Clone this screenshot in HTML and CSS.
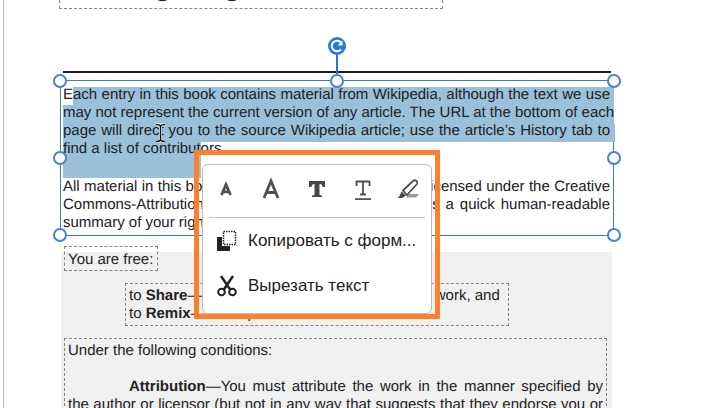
FILE: index.html
```html
<!DOCTYPE html>
<html lang="en">
<head>
<meta charset="utf-8">
<meta name="viewport" content="width=device-width, initial-scale=1">
<title>PDF editor</title>
<link rel="stylesheet" href="styles.css">
</head>
<body>
<main class="page">
  <header class="heading text-box"><h1>Legal rights</h1></header>
  <section class="edited">
    <svg class="highlight" aria-hidden="true"><rect x="13" y="6" width="541" height="37" /><rect x="3" y="24" width="548" height="37"/><rect x="3" y="61" width="138" height="36"/><rect x="551" y="43" width="4" height="18"/></svg>
    <p>Each entry in this book contains material from Wikipedia, although the text we use<br>may not represent the current version of any article. The URL at the bottom of each<br>page will direct you to the source Wikipedia article; use the article’s History tab to</p>
    <p class="last">find a list of contributors.</p>
    <p class="next">All material in this book is, unless otherwise indicated, licensed under the Creative<br>Commons-Attribution-ShareAlike License. This provides a quick human-readable</p>
    <p class="last">summary of your rights.</p>
    <span class="handle top left"></span><span class="handle top center"></span><span class="handle top right"></span>
    <span class="handle middle left"></span><span class="handle middle right"></span>
    <span class="handle bottom left"></span><span class="handle bottom center"></span><span class="handle bottom right"></span>
    <button class="rotate" type="button" aria-label="Rotate">
      <svg viewBox="0 0 18 30" width="18" height="30"><path d="M9 17v13" stroke="#1f7ae0" stroke-width="2"/><circle cx="9" cy="9" r="9" fill="#2b78dc"/><path d="M13 12.500A5.300 5.300 0 1 1 13 5.500" fill="none" stroke="#fff" stroke-width="2"/><path d="M14.500 3.500v5h-5z" fill="#fff"/></svg>
    </button>
    <svg class="cursor" viewBox="0 0 11 20" width="11" height="20" aria-hidden="true"><path d="M1 1.500q4 0 4.500 2q.5-2 4.500-2M1 18.500q4 0 4.500-2q.5 2 4.500 2M5.500 3v14" fill="none" stroke="#fff" stroke-width="3"/><path d="M1 1.500q4 0 4.500 2q.5-2 4.500-2M1 18.500q4 0 4.500-2q.5 2 4.500 2M5.500 3v14" fill="none" stroke="#111" stroke-width="1.500"/></svg>
    <div class="menu-frame">
      <div class="menu" role="menu">
        <div class="tools">
          <button type="button" aria-label="Decrease font size"><svg viewBox="0 0 24 24"><path d="M7.500 18 12 7.500l4.500 10.500M9 14.800h6" /></svg></button>
          <button type="button" aria-label="Increase font size"><svg viewBox="0 0 24 24"><path d="M5 21 12 4l7 17M7.500 15.500h9"/></svg></button>
          <button type="button" aria-label="Bold"><svg viewBox="0 0 24 24"><path class="solid" d="M4 4h16v6h-2.500q-.3-3-2.500-3h-.5v10.500q0 1 2.500 1V20H7v-1.500q2.500 0 2.500-1V7H9q-2.200 0-2.500 3H4z"/></svg></button>
          <button type="button" aria-label="Underline"><svg viewBox="0 0 24 24"><path class="thin" d="M5.500 9V4.500h13V9M12 4.500V17M9 17.500h6M4 22.200h16"/></svg></button>
          <button type="button" aria-label="Highlight"><svg viewBox="0 0 24 24"><path d="M10 20.500 13 17h10l-3 3.500z" fill="#999" stroke="none"/><path class="thin" d="m7 13.500 10.500-10q1.500-1 3 .5t.5 3l-10 11z"/><path class="solid" d="m5.500 14.500 4.500 4q-2.500 3-8.500 2.500l2-2z"/></svg></button>
        </div>
        <hr>
        <button class="item" type="button" role="menuitem"><svg viewBox="0 0 22 22"><path d="M1 7h5v9h8v5H1z" fill="#222"/><path d="M7.500 1.500h12v13h-12z" fill="none" stroke="#222" stroke-width="1.500" stroke-dasharray="1.500 1"/></svg><span>Копировать с форм...</span></button>
        <button class="item" type="button" role="menuitem"><svg viewBox="0 0 22 22"><path d="m5 1 9.500 14M17 1 7.500 15" fill="none" stroke="#222" stroke-width="2.500"/><circle cx="5.500" cy="17" r="3.300" fill="none" stroke="#222" stroke-width="2"/><circle cx="16.500" cy="17" r="3.300" fill="none" stroke="#222" stroke-width="2"/></svg><span>Вырезать текст</span></button>
      </div>
    </div>
  </section>
  <section class="license">
    <p class="text-box free">You are free:</p>
    <p class="text-box freedoms">to <b>Share</b>—to copy, distribute and transmit the work, and<br>to <b>Remix</b>—to adapt the work</p>
    <div class="text-box conditions">
      <p>Under the following conditions:</p>
      <p class="attribution"><b>Attribution</b>—You must attribute the work in the manner specified by the author or licensor (but not in any way that suggests that they endorse you or your use of the work).</p>
    </div>
  </section>
</main>
</body>
</html>
```
FILE: styles.css
```css
* { box-sizing: border-box; }
body { margin: 0; background: #fff; color: #222; font: 15px/18px "Liberation Sans", Arial, sans-serif; text-rendering: geometricPrecision; }
p, h1 { margin: 0; }
button { border: 0; padding: 0; background: none; color: inherit; font: inherit; }
.page { margin-left: 3px; border-left: 1px solid #bbb; padding: 0 105px 0 56px; height: 100vh; overflow: hidden; }
.text-box { border: 1px dashed #858585; }
.heading { width: 384px; max-width: 100%; margin-left: -1px; height: 9px; border-top: 0; display: flex; align-items: flex-end; padding: 0 0 6px 60px; }
.heading h1 { font-size: 29px; line-height: 32px; white-space: nowrap; }
.edited { position: relative; height: 156px; margin-top: 71px; border: 1px solid #3d7cc4; padding: 5px 3px 0 2px; text-align: justify; }
.edited::before { content: ""; position: absolute; left: 2px; right: 2px; top: -10px; height: 2px; background: #1c1c1c; }
.edited p { position: relative; color: #1b2026; text-align-last: justify; white-space: nowrap; }
.edited .next { margin-top: 20px; }
.edited .last { text-align-last: left; }
.highlight { position: absolute; left: -1px; top: 0; width: 556px; height: 100px; fill: #9bc0d9; }
.handle { position: absolute; width: 14px; height: 14px; margin: -7px; border: 2px solid #4681d3; border-radius: 50%; background: #fff; }
.top { top: 0; } .middle { top: 50%; } .bottom { top: 100%; }
.left { left: -1px; } .center { left: 50%; } .right { left: calc(100% + 1px); }
.rotate { position: absolute; left: 50%; top: -44px; width: 18px; height: 30px; margin-left: -9px; }
.rotate::after { content: ""; position: absolute; left: 8px; top: 28px; width: 2px; height: 9px; background: #1f7ae0; }
.rotate svg { display: block; }
.cursor { position: absolute; left: 94px; top: 42px; }
.menu-frame { position: absolute; left: 133px; top: 69px; width: 246px; border: 5px solid #fd802f; padding: 9px 3px 0; }
.menu { border: 1px solid #bbb; border-radius: 6px; background: #fff; height: 150px; }
.menu hr { height: 1px; margin: 4px 6px 0; border: 0; background: #c4c4c4; }
.tools { display: grid; grid-template-columns: repeat(5, 1fr); height: 48px; align-items: center; }
.tools button { display: grid; place-items: center; }
.tools svg { width: 24px; height: 24px; fill: none; stroke: #505050; stroke-width: 2.800; }
.tools .solid { fill: #484848; stroke: none; }
.tools .thin { stroke-width: 1.800; }
.item { display: flex; align-items: center; gap: 10px; width: 100%; height: 45px; padding-left: 13px; font-size: 17px; color: #222; white-space: nowrap; }
.item svg { width: 22px; height: 22px; }
.license { background: #f0f0f0; margin: 16px 2px 0 1px; height: 200px; padding: 0 5px 0 3px; display: flow-root; }
.free { width: 94px; margin-top: -6px; padding: 4px 3px; height: 25px; white-space: nowrap; }
.freedoms { width: 384px; margin: 12px 0 0 61px; height: 43px; padding: 3px; white-space: nowrap; }
.conditions { margin-top: 12px; padding: 3px; text-align: justify; }
.attribution { margin-top: 18px; text-indent: 61px; }
```
